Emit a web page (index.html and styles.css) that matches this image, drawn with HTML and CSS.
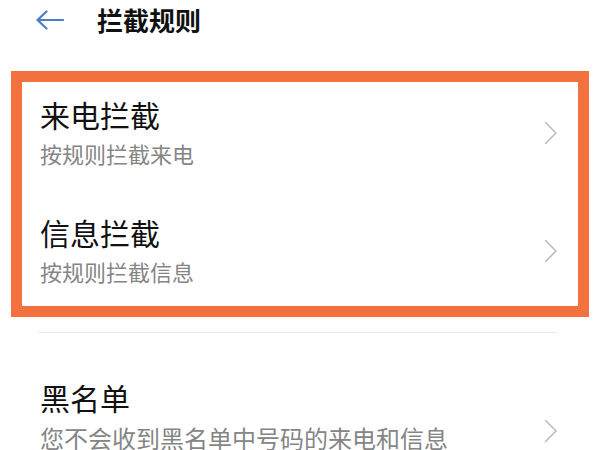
FILE: index.html
```html
<!DOCTYPE html>
<html lang="zh-CN">
<head>
<meta charset="utf-8">
<title>拦截规则</title>
<link rel="stylesheet" href="styles.css">
</head>
<body>
  <header class="topbar">
    <svg class="back" width="28" height="20" viewBox="0 0 28 20" aria-hidden="true">
      <path d="M1.5 10 H27 M10.5 1.5 L1.5 10 L10.5 18.5" fill="none" stroke="#4a7ccb" stroke-width="2.2" stroke-linecap="round" stroke-linejoin="round"/>
    </svg>
    <h1 class="title">拦截规则</h1>
  </header>

  <section class="highlight">
    <div class="row">
      <div class="text">
        <div class="name">来电拦截</div>
        <div class="desc">按规则拦截来电</div>
      </div>
      <svg class="chev" width="14" height="24" viewBox="0 0 14 24" aria-hidden="true">
        <polyline points="1.5,1.5 12,12 1.5,22.5" fill="none" stroke="#bdbdbd" stroke-width="1.6" stroke-linecap="round" stroke-linejoin="round"/>
      </svg>
    </div>
    <div class="row">
      <div class="text">
        <div class="name">信息拦截</div>
        <div class="desc">按规则拦截信息</div>
      </div>
      <svg class="chev" width="14" height="24" viewBox="0 0 14 24" aria-hidden="true">
        <polyline points="1.5,1.5 12,12 1.5,22.5" fill="none" stroke="#bdbdbd" stroke-width="1.6" stroke-linecap="round" stroke-linejoin="round"/>
      </svg>
    </div>
  </section>

  <div class="divider"></div>

  <div class="row row-plain">
    <div class="text">
      <div class="name">黑名单</div>
      <div class="desc desc-lg">您不会收到黑名单中号码的来电和信息</div>
    </div>
    <svg class="chev chev-low" width="14" height="24" viewBox="0 0 14 24" aria-hidden="true">
      <polyline points="1.5,1.5 12,12 1.5,22.5" fill="none" stroke="#bdbdbd" stroke-width="1.6" stroke-linecap="round" stroke-linejoin="round"/>
    </svg>
  </div>
</body>
</html>
```

FILE: styles.css
```css
html, body {
  margin: 0;
  padding: 0;
  background: #ffffff;
}

body {
  width: 600px;
  height: 450px;
  overflow: hidden;
  font-family: "Noto Sans CJK SC", "Noto Sans", sans-serif;
  color: #111111;
}

.topbar {
  display: flex;
  align-items: center;
  height: 40px;
  padding-left: 36px;
  gap: 33px;
}

.back {
  display: block;
  flex: none;
}

.title {
  margin: 0;
  font-size: 26px;
  font-weight: 700;
  line-height: 40px;
  color: #111111;
}

.highlight {
  margin: 31px 11px 0 11px;
  border: 11px solid #f3703f;
  height: 224px;
  overflow: hidden;
  background: #ffffff;
}

.row {
  display: flex;
  justify-content: space-between;
  align-items: flex-start;
  height: 118px;
  box-sizing: border-box;
  padding: 12px 20px 0 18px;
}

.row .chev {
  margin-top: 27px;
}

.name {
  font-size: 30px;
  line-height: 40px;
  color: #111111;
}

.desc {
  font-size: 22px;
  line-height: 38px;
  color: #858585;
}

.desc-lg {
  font-size: 24px;
  line-height: 36px;
  margin-top: 3px;
}

.chev {
  display: block;
  flex: none;
}

.divider {
  height: 1px;
  background: #ebebeb;
  margin: 15px 42px 0 38px;
}

.row-plain {
  height: auto;
  padding: 44px 42px 0 40px;
}

.row-plain .chev-low {
  margin-top: 42px;
}
```
